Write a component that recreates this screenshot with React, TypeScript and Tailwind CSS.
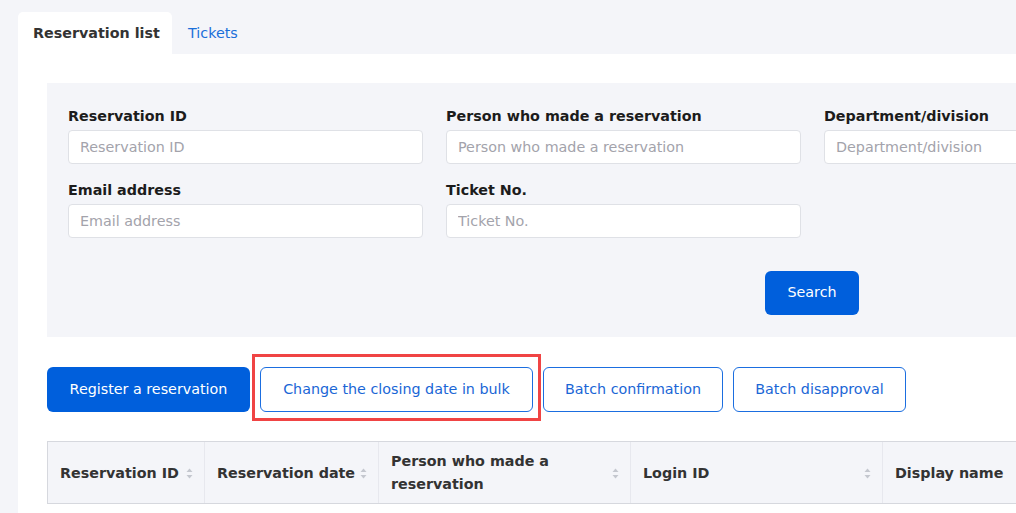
import React from "react";

const font = { fontFamily: '"DejaVu Sans", Verdana, sans-serif' };

function SortIcon() {
  return (
    <svg width="7" height="11" viewBox="0 0 7 11" className="shrink-0">
      <path d="M3.5 0.5 L6.5 4 L0.5 4 Z" fill="#c4c7cf" />
      <path d="M3.5 10.5 L6.5 7 L0.5 7 Z" fill="#c4c7cf" />
    </svg>
  );
}

function Field({ label }: { label: string }) {
  return (
    <div className="flex flex-col">
      <div className="text-[14.3px] font-bold leading-[20px] text-[#1c1c1c] mb-[4px]">{label}</div>
      <input
        placeholder={label}
        className="h-[34px] w-full rounded-[4px] border border-[#dfe1e6] bg-white px-[11px] text-[14.3px] text-[#333] placeholder:text-[#a3a3ab] outline-none"
        style={font}
      />
    </div>
  );
}

export default function App() {
  const cols: { label: React.ReactNode; w: string; sort: boolean }[] = [
    { label: "Reservation ID", w: "w-[157px]", sort: true },
    { label: "Reservation date", w: "w-[174px]", sort: true },
    { label: <>Person who made a<br />reservation</>, w: "w-[252px]", sort: true },
    { label: "Login ID", w: "w-[252px]", sort: true },
    { label: "Display name", w: "w-[250px]", sort: false },
  ];
  return (
    <div className="w-[1016px] h-[513px] overflow-hidden bg-[#f4f5f9]" style={font}>
      <div className="pl-[18px] pt-[12px]">
        <div className="flex h-[42px] items-stretch">
          <div className="flex w-[154px] items-center rounded-t-[5px] bg-white pl-[15px] pt-[1px] text-[14.3px] font-bold text-[#333]">
            Reservation list
          </div>
          <div className="flex items-center pl-[16px] pt-[1px] text-[14.3px] text-[#1a6fd9]">Tickets</div>
        </div>
        <div className="w-[1600px] bg-white pl-[29px] pt-[29px] pb-[40px]">
          <div className="w-[1530px] bg-[#f4f5f9] pl-[21px] pt-[23px] pb-[22px]">
            <div className="grid grid-cols-[355px_355px_355px] gap-x-[23px] gap-y-[16px]">
              <Field label="Reservation ID" />
              <Field label="Person who made a reservation" />
              <Field label="Department/division" />
              <Field label="Email address" />
              <Field label="Ticket No." />
            </div>
            <div className="mt-[33px] pl-[697px]">
              <button className="h-[44px] w-[94px] rounded-[6px] bg-[#005fdc] text-[14.3px] text-white">Search</button>
            </div>
          </div>
          <div className="mt-[30px] flex gap-[10px]">
            <button className="h-[45px] w-[203px] rounded-[6px] bg-[#005fdc] text-[14.3px] text-white">Register a reservation</button>
            <div className="relative">
              <button className="h-[45px] w-[273px] rounded-[6px] border border-[#1b6ee0] bg-white text-[14.3px] text-[#1a66d6]">
                Change the closing date in bulk
              </button>
              <div className="pointer-events-none absolute left-[-8px] right-[-8px] top-[-13px] bottom-[-9px] border-[3px] border-[#f04444]" />
            </div>
            <button className="h-[45px] w-[180px] rounded-[6px] border border-[#1b6ee0] bg-white text-[14.3px] text-[#1a66d6]">Batch confirmation</button>
            <button className="h-[45px] w-[173px] rounded-[6px] border border-[#1b6ee0] bg-white text-[14.3px] text-[#1a66d6]">Batch disapproval</button>
          </div>
          <div className="mt-[29px] flex h-[63px] w-[1400px] border-y border-l border-[#d6d8de] bg-[#f4f5f9]">
            {cols.map((c, i) => (
              <div
                key={i}
                className={`${c.w} flex items-center justify-between gap-[4px] pl-[12px] pr-[11px] pt-[1px] border-r border-[#e7e8ee] text-[14.3px] font-bold leading-[23px] text-[#333]`}
              >
                <span className="whitespace-nowrap">{c.label}</span>
                {c.sort && <SortIcon />}
              </div>
            ))}
          </div>
        </div>
      </div>
    </div>
  );
}
